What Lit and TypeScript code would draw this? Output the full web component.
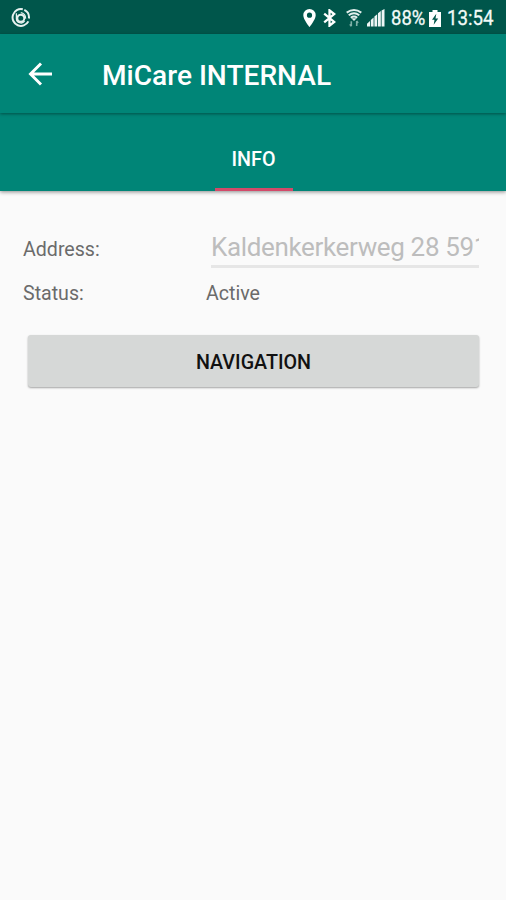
import { LitElement, html, css } from "lit";
import { customElement } from "lit/decorators.js";

@customElement("status-bar")
class StatusBar extends LitElement {
  static styles = css`
    :host { display: flex; align-items: center; height: 34px; box-sizing: border-box; background: #00564b; color: #f2faf8; padding: 1px 0 0 10px; }
    .spacer { flex: 1; }
    svg { display: block; flex: none; }
    .pin { margin-right: 7px; }
    .bt { margin-right: 10px; }
    .wifi { margin-right: 5px; }
    .signal { margin-right: 6px; }
    .text { font: 400 21px/34px Roboto, sans-serif; height: 34px; margin-top: 1px; white-space: nowrap; transform-origin: 0 50%; -webkit-text-stroke: 0.3px; }
    .percent { width: 38px; transform: scaleX(0.88); }
    .clock { width: 59px; transform: scaleX(0.89); }
    .battery { margin: 1px 6px 0 0; }
  `;
  render() {
    return html`
      <svg width="21" height="20" viewBox="0 0 21 20" fill="none" stroke="#e6f1ef">
        <path d="M12.8 1.3A8.4 8.4 0 1 0 18.4 13.4M14.3 1.9a8.4 8.4 0 0 1 4.6 8.6" stroke-width="2"/>
        <circle cx="10.8" cy="10.3" r="3.5" stroke-width="2"/>
        <path d="M6.4 5.2v5.4a4.6 4.6 0 0 0 8.2 2.6M10.8 4.6a5.5 5.5 0 0 1 4.8 6" stroke-width="1.3"/>
      </svg>
      <div class="spacer"></div>
      <svg class="pin" width="13" height="18" viewBox="0 0 13 18" fill="#fff"><path fill-rule="evenodd" d="M6.5 0A6.2 6.2 0 0 0 .3 6.2C.3 10.5 6.5 18 6.5 18s6.2-7.5 6.2-11.8A6.2 6.2 0 0 0 6.5 0zm0 3.6a2.6 2.6 0 1 1 0 5.2 2.6 2.6 0 0 1 0-5.2z"/></svg>
      <svg class="bt" width="13" height="18" viewBox="0 0 13 18" fill="none" stroke="#fff" stroke-width="2.3"><path d="M1.2 4.6l10 8.3-4.7 3.8V1.3l4.7 3.8-10 8.3"/></svg>
      <svg class="wifi" width="16" height="18" viewBox="0 0 16 18" fill="none" stroke="#e3efed" stroke-width="2">
        <path d="M.7 3.6Q8-1.4 15.3 3.6M2.7 6.2Q8 2.2 13.3 6.2M4.8 8.7Q8 6.2 11.2 8.7"/><path d="M5.3 9.2h5.4L8 12z" fill="#e3efed" stroke="none"/>
        <path d="M5.3 12.3v5M3.9 15.3l1.4 2M10.7 17v-5M12.1 14l-1.4-2" stroke="#7fb0a8" stroke-width="1.6"/>
      </svg>
      <svg class="signal" width="18" height="18" viewBox="0 0 18 18" fill="#eef6f5"><path d="M0 17.5v-2.7l3-2.8v5.5zM3.8 17.5v-6.6l2.8-2.4v9zM7.4 17.5V7.6l2.8-2.4v12.3zM11 17.5V4.3l2.8-2.2v15.4zM14.6 17.5V1.5L17.5 0v17.5z"/></svg>
      <div class="text percent">88%</div>
      <svg class="battery" width="12" height="17" viewBox="0 0 12 17" fill="#fff"><path d="M3.5 0h5v2H12v15H0V2h3.5z"/><path d="M7.3 3.8L3 9.8h2.5l-.8 5 4.5-6.3H6.5z" fill="#00564b"/></svg>
      <div class="text clock">13:54</div>
    `;
  }
}

@customElement("app-root")
class AppRoot extends LitElement {
  static styles = css`
    :host { display: flex; flex-direction: column; height: 900px; background: #fafafa; font-family: Roboto, sans-serif; overflow: hidden; }
    .toolbar { display: flex; align-items: center; height: 79px; box-sizing: border-box; padding: 2px 0 0 28px; background: #008577; box-shadow: 0 1px 3px rgba(0,0,0,.4); position: relative; color: #fff; }
    .back { width: 24px; height: 24px; margin: -2px 50px 0 0; }
    h1 { margin: 2px 0 0; font-size: 28.1px; font-weight: 500; line-height: 32px; white-space: nowrap; }
    .tabs { display: flex; justify-content: center; height: 78px; background: #008577; box-shadow: 0 1px 4px rgba(0,0,0,.45); }
    .tab { display: flex; align-items: center; justify-content: center; width: 78px; box-sizing: border-box; padding: 17px 0 0 0; border-bottom: 3px solid #d34a69; color: #fff; font-size: 19.7px; font-weight: 500; margin-left: 1px; }
    main { padding: 34px 27px 0 23px; }
    .row { display: grid; grid-template-columns: 183px 1fr; align-items: center; height: 44px; font-size: 19.6px; color: #6b6b6b; }
    .row span { padding-top: 4px; }
    .field { height: 42px; margin-left: 5px; border-bottom: 3px solid #e6e6e6; box-sizing: border-box; overflow: hidden; white-space: nowrap; font-size: 26px; letter-spacing: -0.35px; line-height: 42px; color: #bdbdbd; }
    .button { display: block; width: 451px; height: 52px; margin: 22px 0 0 5px; padding: 2px 0 0; border: 0; border-radius: 3px; background: #d6d8d7; box-shadow: 0 1px 2px rgba(0,0,0,.35); color: #111; font: 500 19.7px/52px Roboto, sans-serif; text-align: center; }
  `;
  render() {
    return html`
      <status-bar></status-bar>
      <div class="toolbar">
        <svg class="back" viewBox="0 0 24 24" fill="none" stroke="#fff" stroke-width="2.9"><path d="M24 12H2.5M13 1.5L2.5 12 13 22.5"/></svg>
        <h1>MiCare INTERNAL</h1>
      </div>
      <div class="tabs"><div class="tab">INFO</div></div>
      <main>
        <div class="row"><span>Address:</span><div class="field">Kaldenkerkerweg 28 5913</div></div>
        <div class="row"><span>Status:</span><span>Active</span></div>
        <button class="button">NAVIGATION</button>
      </main>
    `;
  }
}
